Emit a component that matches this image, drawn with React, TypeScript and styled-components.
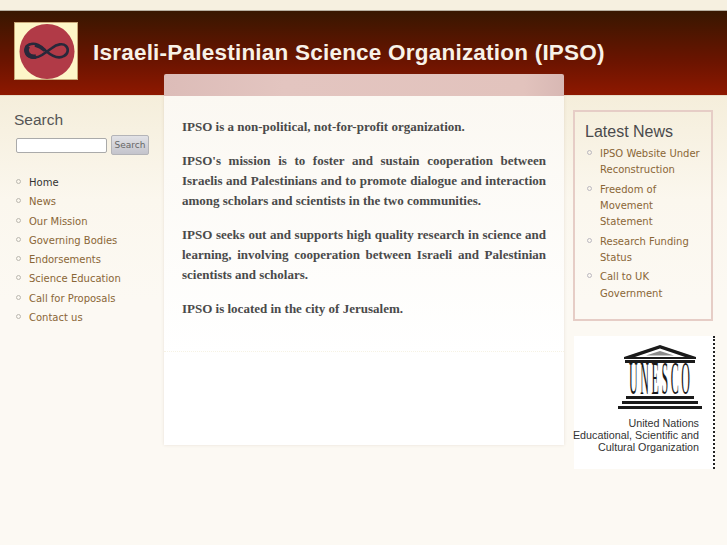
import styled, { createGlobalStyle } from "styled-components";

const GlobalStyle = createGlobalStyle`
  html, body {
    margin: 0;
    padding: 0;
    background: #fcf9f3;
  }
`;

const menuItems = [
  "Home",
  "News",
  "Our Mission",
  "Governing Bodies",
  "Endorsements",
  "Science Education",
  "Call for Proposals",
  "Contact us",
];

const newsItems = [
  "IPSO Website Under Reconstruction",
  "Freedom of Movement Statement",
  "Research Funding Status",
  "Call to UK Government",
];

const Logo = () => (
  <LogoBox>
    <svg width="62" height="56" viewBox="0 0 62 56">
      <circle cx="32" cy="28.5" r="27.5" fill="#b13a47" />
      <path
        d="M31 28C26 22 20 20 16 21C11 22 9.5 26 11 30C13 35 21 36 27 32L37 25C42 21 48 20 51 23C54 26 53 31 49 33C44 36 38 34 31 28"
        fill="none"
        stroke="#28283a"
        strokeWidth="2.6"
      />
      <path d="M13 23C9.5 28 13 35 21 33.5" fill="none" stroke="#28283a" strokeWidth="4.5" />
      <path d="M20 22C24 23 27 25 30 27.5" fill="none" stroke="#28283a" strokeWidth="3.4" />
    </svg>
  </LogoBox>
);

const UnescoTemple = () => (
  <svg width="84" height="64" viewBox="0 0 84 64">
    <path d="M42 0L78 12V14H6V12ZM42 3.5L17 12H67Z" fill="#1a1a1a" fillRule="evenodd" />
    <path d="M42 6L28 10.5H56Z" fill="#8a8a8a" />
    <rect x="7" y="15" width="70" height="3" fill="#1a1a1a" />
    <text
      x="11"
      y="13"
      transform="scale(1 3.8)"
      fontFamily="'Liberation Serif', serif"
      fontSize="12"
      textLength="61"
      lengthAdjust="spacing"
      fill="#1a1a1a"
    >
      UNESCO
    </text>
    <rect x="8" y="51" width="68" height="3" fill="#1a1a1a" />
    <rect x="4" y="56" width="76" height="3" fill="#1a1a1a" />
    <rect x="0" y="61" width="84" height="3" fill="#1a1a1a" />
  </svg>
);

export default function App() {
  return (
    <Page>
      <GlobalStyle />
      <TopStrip />
      <Header>
        <Logo />
        <SiteTitle>Israeli-Palestinian Science Organization (IPSO)</SiteTitle>
      </Header>
      <Columns>
        <LeftColumn>
          <SearchTitle>Search</SearchTitle>
          <SearchForm>
            <SearchInput type="text" />
            <SearchButton type="button">Search</SearchButton>
          </SearchForm>
          <Menu>
            {menuItems.map((item, i) => (
              <MenuItem key={item} $active={i === 0}>
                {item}
              </MenuItem>
            ))}
          </Menu>
        </LeftColumn>

        <Center>
          <CenterBand />
          <CenterBody>
            <Article>
              <Paragraph>IPSO is a non-political, not-for-profit organization.</Paragraph>
              <Paragraph>
                IPSO's mission is to foster and sustain cooperation between Israelis and
                Palestinians and to promote dialogue and interaction among scholars and
                scientists in the two communities.
              </Paragraph>
              <Paragraph>
                IPSO seeks out and supports high quality research in science and learning,
                involving cooperation between Israeli and Palestinian scientists and scholars.
              </Paragraph>
              <Paragraph>IPSO is located in the city of Jerusalem.</Paragraph>
            </Article>
          </CenterBody>
        </Center>

        <RightColumn>
          <NewsBox>
            <NewsTitle>Latest News</NewsTitle>
            <NewsList>
              {newsItems.map((item) => (
                <NewsItem key={item}>{item}</NewsItem>
              ))}
            </NewsList>
          </NewsBox>
          <UnescoCard>
            <TempleRow>
              <UnescoTemple />
            </TempleRow>
            <UnescoCaption>
              United Nations
              <br />
              Educational, Scientific and
              <br />
              Cultural Organization
            </UnescoCaption>
          </UnescoCard>
        </RightColumn>
      </Columns>
    </Page>
  );
}

const Page = styled.div`
  width: 727px;
  height: 545px;
  overflow: hidden;
  background: linear-gradient(#f5eedb 96px, #fbf7ee 200px, #fcf9f3 300px);
`;

const TopStrip = styled.div`
  height: 10px;
  background: #f6f0e0;
  border-bottom: 1px solid #b8b0a0;
`;

const Header = styled.header`
  height: 85px;
  box-sizing: border-box;
  padding: 11px 0 0 14px;
  display: flex;
  align-items: flex-start;
  gap: 14px;
  background: linear-gradient(#381700, #6b1400 60%, #8e1800);
  border-bottom: 1px solid #e8dcc8;
`;

const LogoBox = styled.div`
  width: 62px;
  height: 56px;
  flex: none;
  background: #fdf6c8;
  border: 1px solid #c8a878;
  display: flex;
  svg {
    display: block;
  }
`;

const SiteTitle = styled.h1`
  margin: 16px 0 0 1px;
  font: bold 22.5px/30px "Liberation Sans", Arial, sans-serif;
  letter-spacing: 0.22px;
  color: #f8f2e8;
  white-space: nowrap;
`;

const Columns = styled.div`
  display: grid;
  grid-template-columns: 164px 400px 163px;
  align-items: start;
`;

const LeftColumn = styled.aside`
  padding: 14px 0 0 14px;
`;

const SearchTitle = styled.h3`
  margin: 0;
  font: normal 15.5px/20px "Liberation Sans", Arial, sans-serif;
  color: #555;
`;

const SearchForm = styled.form`
  display: flex;
  align-items: center;
  gap: 4px;
  margin: 5px 0 0 2px;
`;

const SearchInput = styled.input`
  width: 91px;
  height: 15px;
  box-sizing: border-box;
  padding: 0 2px;
  background: #fff;
  border: 1px solid #aaa;
  border-radius: 2px;
`;

const SearchButton = styled.button`
  width: 38px;
  height: 20px;
  padding: 0;
  font: 9px "DejaVu Sans", Verdana, sans-serif;
  color: #666;
  background: linear-gradient(#e2e2e6, #c4c4cc);
  border: 1px solid #b4b4b8;
  border-radius: 2px;
`;

const Menu = styled.ul`
  list-style: none;
  margin: 18px 0 0;
  padding: 0;
`;

const MenuItem = styled.li<{ $active?: boolean }>`
  position: relative;
  padding-left: 15px;
  font: 10px/19.25px "DejaVu Sans", Verdana, sans-serif;
  color: ${({ $active }) => ($active ? "#333" : "#8a6636")};
  &::before {
    content: "";
    position: absolute;
    left: 1.5px;
    top: 6px;
    width: 3px;
    height: 3px;
    border: 1px solid #bbb8b0;
    border-radius: 50%;
  }
`;

const Center = styled.main`
  margin-top: -22px;
  height: 371px;
  display: flex;
  flex-direction: column;
  box-shadow: 0 0 3px rgba(120, 90, 60, 0.15);
`;

const CenterBand = styled.div`
  height: 22px;
  flex: none;
  background: linear-gradient(90deg, #dcbcb8, #e3c5c0 30%, #e2c3bd 90%, #d8b8b4);
  border-radius: 2px 2px 0 0;
`;

const CenterBody = styled.div`
  flex: 1;
  background: linear-gradient(#fbf8f2, #ffffff 260px);
`;

const Article = styled.article`
  height: 256px;
  box-sizing: border-box;
  padding: 21px 18px 0;
  border-bottom: 1px dotted #f6f2e4;
`;

const Paragraph = styled.p`
  margin: 0 0 14px;
  font: bold 13px/20px "Liberation Serif", "Times New Roman", serif;
  color: #4a4a4a;
  text-align: justify;
`;

const RightColumn = styled.aside`
  padding: 14px 0 0 9px;
`;

const NewsBox = styled.section`
  width: 140px;
  height: 211px;
  box-sizing: border-box;
  padding: 10px 4px 0 10px;
  border: 2px solid #e6cdc6;
`;

const NewsTitle = styled.h3`
  margin: 0 0 4px;
  font: normal 16px/20px "Liberation Sans", Arial, sans-serif;
  color: #4a4a4c;
`;

const NewsList = styled.ul`
  list-style: none;
  margin: 0;
  padding: 0;
`;

const NewsItem = styled.li`
  position: relative;
  padding-left: 15px;
  margin-bottom: 2.8px;
  font: 10px/16.4px "DejaVu Sans", Verdana, sans-serif;
  color: #8a6636;
  &::before {
    content: "";
    position: absolute;
    left: 2px;
    top: 4px;
    width: 3px;
    height: 3px;
    border: 1px solid #bbb8c0;
    border-radius: 50%;
  }
`;

const UnescoCard = styled.figure`
  width: 141px;
  height: 133px;
  box-sizing: border-box;
  margin: 15px 0 0 1px;
  padding-top: 9px;
  background: #fff;
  border-right: 2px dotted #222;
`;

const TempleRow = styled.div`
  display: flex;
  justify-content: flex-end;
  padding-right: 11px;
  svg {
    display: block;
  }
`;

const UnescoCaption = styled.figcaption`
  margin: 8px 14px 0 -2px;
  font: 10.75px/12px "Liberation Sans", Arial, sans-serif;
  color: #333;
  text-align: right;
  white-space: nowrap;
`;
